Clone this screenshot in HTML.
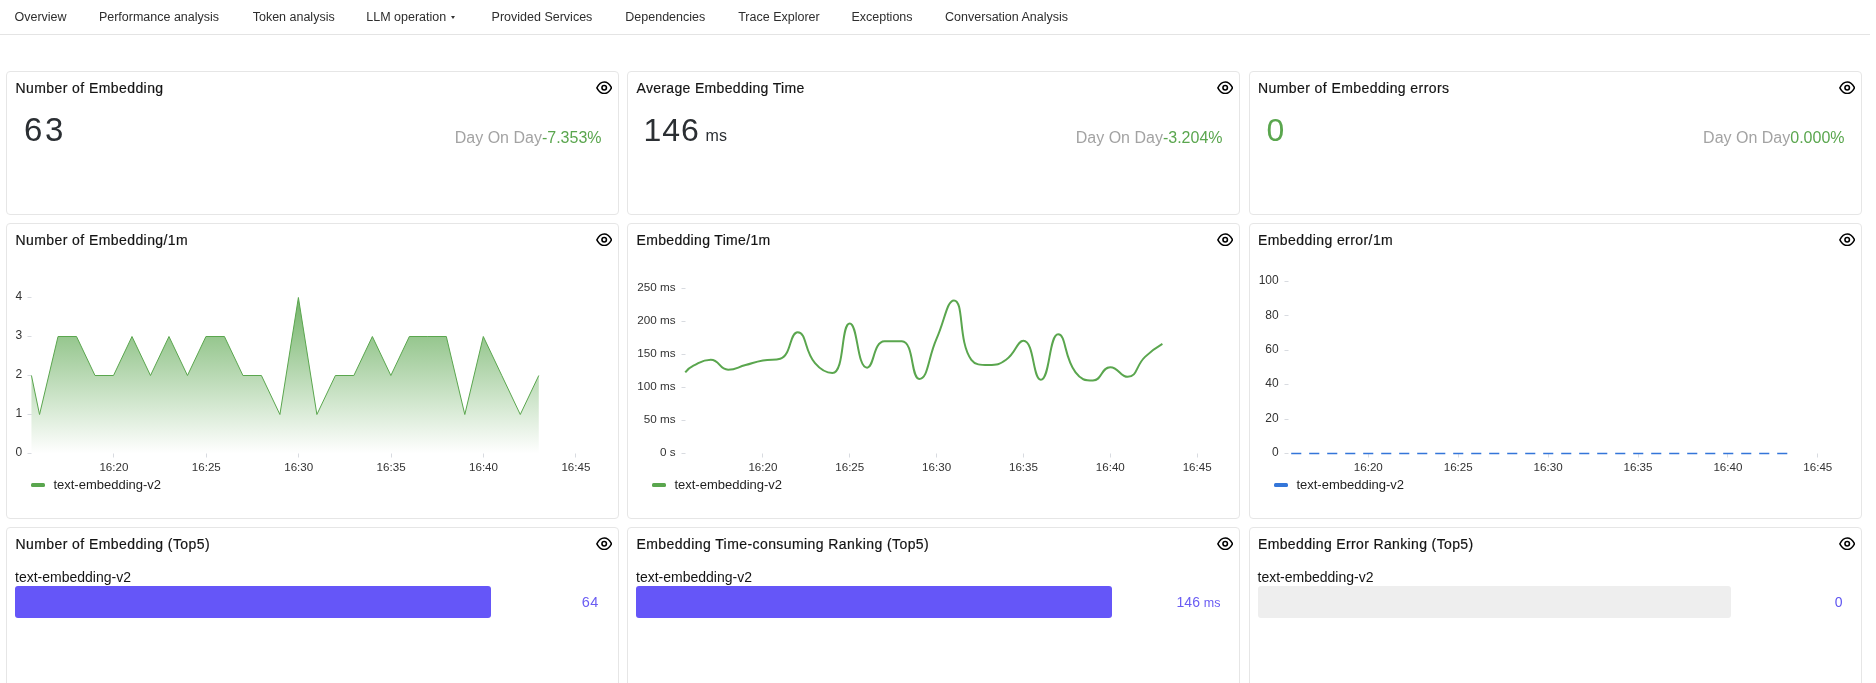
<!DOCTYPE html>
<html><head><meta charset="utf-8"><title>Dashboard</title>
<style>
html,body{margin:0;padding:0;background:#fff;}
body{width:1876px;height:683px;overflow:hidden;position:relative;font-family:"Liberation Sans",sans-serif;}
#wrap{position:absolute;left:0;top:0;width:1876px;height:683px;will-change:transform;}
.t{position:absolute;white-space:nowrap;}
.card{position:absolute;border:1px solid #e6e6e6;border-radius:4px;background:#fff;}
.eye{position:absolute;}
.charts{position:absolute;left:0;top:0;font-family:"Liberation Sans",sans-serif;}
</style></head><body><div id="wrap">
<div class="t" style="left:14.50px;top:11.32px;font-size:12.5px;line-height:12.5px;color:#2e2e2e;">Overview</div>
<div class="t" style="left:98.90px;top:11.32px;font-size:12.5px;line-height:12.5px;color:#2e2e2e;">Performance analysis</div>
<div class="t" style="left:252.70px;top:11.32px;font-size:12.5px;line-height:12.5px;color:#2e2e2e;">Token analysis</div>
<div class="t" style="left:366.30px;top:11.32px;font-size:12.5px;line-height:12.5px;color:#2e2e2e;">LLM operation</div>
<div class="t" style="left:491.60px;top:11.32px;font-size:12.5px;line-height:12.5px;color:#2e2e2e;">Provided Services</div>
<div class="t" style="left:625.30px;top:11.32px;font-size:12.5px;line-height:12.5px;color:#2e2e2e;">Dependencies</div>
<div class="t" style="left:738.20px;top:11.32px;font-size:12.5px;line-height:12.5px;color:#2e2e2e;">Trace Explorer</div>
<div class="t" style="left:851.40px;top:11.32px;font-size:12.5px;line-height:12.5px;color:#2e2e2e;">Exceptions</div>
<div class="t" style="left:945.10px;top:11.32px;font-size:12.5px;line-height:12.5px;color:#2e2e2e;">Conversation Analysis</div>
<div style="position:absolute;left:450.6px;top:16px;width:0;height:0;border-left:2.8px solid transparent;border-right:2.8px solid transparent;border-top:3px solid #333;"></div>
<div style="position:absolute;left:0;top:34px;width:1870px;height:1px;background:#e4e4e4;"></div>
<div class="card" style="left:6px;top:71px;width:611px;height:142px;"></div>
<div class="card" style="left:627px;top:71px;width:611px;height:142px;"></div>
<div class="card" style="left:1249px;top:71px;width:611px;height:142px;"></div>
<div class="card" style="left:6px;top:223px;width:611px;height:294px;"></div>
<div class="card" style="left:627px;top:223px;width:611px;height:294px;"></div>
<div class="card" style="left:1249px;top:223px;width:611px;height:294px;"></div>
<div class="card" style="left:6px;top:527px;width:611px;height:198px;"></div>
<div class="card" style="left:627px;top:527px;width:611px;height:198px;"></div>
<div class="card" style="left:1249px;top:527px;width:611px;height:198px;"></div>
<div class="t" style="left:15.50px;top:80.75px;font-size:14px;line-height:14px;color:#141414;letter-spacing:0.42px;-webkit-text-stroke:0.18px #141414;">Number of Embedding</div>
<svg class="eye" style="left:595.80px;top:80.76px" width="16.4" height="13.67" viewBox="0 0 24 20"><path d="M1.25 10C4.3 4.2 7.8 1.6 12 1.6S19.7 4.2 22.75 10C19.7 15.8 16.2 18.4 12 18.4S4.3 15.8 1.25 10Z" fill="none" stroke="#000" stroke-width="2.2" stroke-linejoin="round"/><circle cx="12" cy="10" r="3.3" fill="none" stroke="#000" stroke-width="2.3"/></svg>
<div class="t" style="left:636.50px;top:80.75px;font-size:14px;line-height:14px;color:#141414;letter-spacing:0.33px;-webkit-text-stroke:0.18px #141414;">Average Embedding Time</div>
<svg class="eye" style="left:1216.80px;top:80.76px" width="16.4" height="13.67" viewBox="0 0 24 20"><path d="M1.25 10C4.3 4.2 7.8 1.6 12 1.6S19.7 4.2 22.75 10C19.7 15.8 16.2 18.4 12 18.4S4.3 15.8 1.25 10Z" fill="none" stroke="#000" stroke-width="2.2" stroke-linejoin="round"/><circle cx="12" cy="10" r="3.3" fill="none" stroke="#000" stroke-width="2.3"/></svg>
<div class="t" style="left:1258.00px;top:80.75px;font-size:14px;line-height:14px;color:#141414;letter-spacing:0.42px;-webkit-text-stroke:0.18px #141414;">Number of Embedding errors</div>
<svg class="eye" style="left:1838.80px;top:80.76px" width="16.4" height="13.67" viewBox="0 0 24 20"><path d="M1.25 10C4.3 4.2 7.8 1.6 12 1.6S19.7 4.2 22.75 10C19.7 15.8 16.2 18.4 12 18.4S4.3 15.8 1.25 10Z" fill="none" stroke="#000" stroke-width="2.2" stroke-linejoin="round"/><circle cx="12" cy="10" r="3.3" fill="none" stroke="#000" stroke-width="2.3"/></svg>
<div class="t" style="left:15.50px;top:232.75px;font-size:14px;line-height:14px;color:#141414;letter-spacing:0.42px;-webkit-text-stroke:0.18px #141414;">Number of Embedding/1m</div>
<svg class="eye" style="left:595.80px;top:232.76px" width="16.4" height="13.67" viewBox="0 0 24 20"><path d="M1.25 10C4.3 4.2 7.8 1.6 12 1.6S19.7 4.2 22.75 10C19.7 15.8 16.2 18.4 12 18.4S4.3 15.8 1.25 10Z" fill="none" stroke="#000" stroke-width="2.2" stroke-linejoin="round"/><circle cx="12" cy="10" r="3.3" fill="none" stroke="#000" stroke-width="2.3"/></svg>
<div class="t" style="left:636.50px;top:232.75px;font-size:14px;line-height:14px;color:#141414;letter-spacing:0.33px;-webkit-text-stroke:0.18px #141414;">Embedding Time/1m</div>
<svg class="eye" style="left:1216.80px;top:232.76px" width="16.4" height="13.67" viewBox="0 0 24 20"><path d="M1.25 10C4.3 4.2 7.8 1.6 12 1.6S19.7 4.2 22.75 10C19.7 15.8 16.2 18.4 12 18.4S4.3 15.8 1.25 10Z" fill="none" stroke="#000" stroke-width="2.2" stroke-linejoin="round"/><circle cx="12" cy="10" r="3.3" fill="none" stroke="#000" stroke-width="2.3"/></svg>
<div class="t" style="left:1258.00px;top:232.75px;font-size:14px;line-height:14px;color:#141414;letter-spacing:0.42px;-webkit-text-stroke:0.18px #141414;">Embedding error/1m</div>
<svg class="eye" style="left:1838.80px;top:232.76px" width="16.4" height="13.67" viewBox="0 0 24 20"><path d="M1.25 10C4.3 4.2 7.8 1.6 12 1.6S19.7 4.2 22.75 10C19.7 15.8 16.2 18.4 12 18.4S4.3 15.8 1.25 10Z" fill="none" stroke="#000" stroke-width="2.2" stroke-linejoin="round"/><circle cx="12" cy="10" r="3.3" fill="none" stroke="#000" stroke-width="2.3"/></svg>
<div class="t" style="left:15.50px;top:536.75px;font-size:14px;line-height:14px;color:#141414;letter-spacing:0.42px;-webkit-text-stroke:0.18px #141414;">Number of Embedding (Top5)</div>
<svg class="eye" style="left:595.80px;top:536.76px" width="16.4" height="13.67" viewBox="0 0 24 20"><path d="M1.25 10C4.3 4.2 7.8 1.6 12 1.6S19.7 4.2 22.75 10C19.7 15.8 16.2 18.4 12 18.4S4.3 15.8 1.25 10Z" fill="none" stroke="#000" stroke-width="2.2" stroke-linejoin="round"/><circle cx="12" cy="10" r="3.3" fill="none" stroke="#000" stroke-width="2.3"/></svg>
<div class="t" style="left:636.50px;top:536.75px;font-size:14px;line-height:14px;color:#141414;letter-spacing:0.42px;-webkit-text-stroke:0.18px #141414;">Embedding Time-consuming Ranking (Top5)</div>
<svg class="eye" style="left:1216.80px;top:536.76px" width="16.4" height="13.67" viewBox="0 0 24 20"><path d="M1.25 10C4.3 4.2 7.8 1.6 12 1.6S19.7 4.2 22.75 10C19.7 15.8 16.2 18.4 12 18.4S4.3 15.8 1.25 10Z" fill="none" stroke="#000" stroke-width="2.2" stroke-linejoin="round"/><circle cx="12" cy="10" r="3.3" fill="none" stroke="#000" stroke-width="2.3"/></svg>
<div class="t" style="left:1258.00px;top:536.75px;font-size:14px;line-height:14px;color:#141414;letter-spacing:0.36px;-webkit-text-stroke:0.18px #141414;">Embedding Error Ranking (Top5)</div>
<svg class="eye" style="left:1838.80px;top:536.76px" width="16.4" height="13.67" viewBox="0 0 24 20"><path d="M1.25 10C4.3 4.2 7.8 1.6 12 1.6S19.7 4.2 22.75 10C19.7 15.8 16.2 18.4 12 18.4S4.3 15.8 1.25 10Z" fill="none" stroke="#000" stroke-width="2.2" stroke-linejoin="round"/><circle cx="12" cy="10" r="3.3" fill="none" stroke="#000" stroke-width="2.3"/></svg>
<div class="t" style="left:24.00px;top:113.47px;font-size:33px;line-height:33px;color:#2b2f33;letter-spacing:2.6px;">63</div>
<div class="t" style="left:643.50px;top:114.11px;font-size:32px;line-height:32px;color:#2b2f33;letter-spacing:1.0px;">146</div>
<div class="t" style="left:705.60px;top:127.66px;font-size:16px;line-height:16px;color:#2b2f33;">ms</div>
<div class="t" style="left:1266.50px;top:114.11px;font-size:32px;line-height:32px;color:#5aa64e;">0</div>
<div class="t" style="right:1274.50px;top:129.96px;font-size:16px;line-height:16px;color:#5aa64e;"><span style="color:#a3a3a3">Day On Day</span>-7.353%</div>
<div class="t" style="right:653.50px;top:129.96px;font-size:16px;line-height:16px;color:#5aa64e;"><span style="color:#a3a3a3">Day On Day</span>-3.204%</div>
<div class="t" style="right:31.50px;top:129.96px;font-size:16px;line-height:16px;color:#5aa64e;"><span style="color:#a3a3a3">Day On Day</span>0.000%</div>
<div class="t" style="left:15.00px;top:569.85px;font-size:14px;line-height:14px;color:#141414;">text-embedding-v2</div>
<div class="t" style="left:636.00px;top:569.85px;font-size:14px;line-height:14px;color:#141414;">text-embedding-v2</div>
<div class="t" style="left:1257.50px;top:569.85px;font-size:14px;line-height:14px;color:#141414;">text-embedding-v2</div>
<div style="position:absolute;left:15.1px;top:586px;width:475.8px;height:32px;border-radius:3px;background:#6556f8;"></div>
<div style="position:absolute;left:636.0px;top:586px;width:475.8px;height:32px;border-radius:3px;background:#6556f8;"></div>
<div style="position:absolute;left:1258.0px;top:586px;width:472.8px;height:32px;border-radius:3px;background:#eeeeee;"></div>
<div class="t" style="right:1277.00px;top:594.83px;font-size:14.5px;line-height:14.5px;color:#6a5cf3;letter-spacing:0.6px;">64</div>
<div class="t" style="right:655.50px;top:595.25px;font-size:14px;line-height:14px;color:#6a5cf3;">146 <span style="font-size:12.5px">ms</span></div>
<div class="t" style="right:33.50px;top:595.25px;font-size:14px;line-height:14px;color:#5f55f0;">0</div>
<svg class="charts" width="1876" height="683" viewBox="0 0 1876 683"><defs><linearGradient id="g1" x1="0" y1="297.5" x2="0" y2="453.5" gradientUnits="userSpaceOnUse"><stop offset="0" stop-color="#5aa64e" stop-opacity="0.85"/><stop offset="1" stop-color="#5aa64e" stop-opacity="0.0"/></linearGradient></defs><line x1="27.50" y1="453.50" x2="31.50" y2="453.50" stroke="#d8dbe0" stroke-width="1"/><text x="22.30" y="456.10" font-size="12" fill="#333" text-anchor="end">0</text><line x1="27.50" y1="414.50" x2="31.50" y2="414.50" stroke="#d8dbe0" stroke-width="1"/><text x="22.30" y="417.10" font-size="12" fill="#333" text-anchor="end">1</text><line x1="27.50" y1="375.50" x2="31.50" y2="375.50" stroke="#d8dbe0" stroke-width="1"/><text x="22.30" y="378.10" font-size="12" fill="#333" text-anchor="end">2</text><line x1="27.50" y1="336.50" x2="31.50" y2="336.50" stroke="#d8dbe0" stroke-width="1"/><text x="22.30" y="339.10" font-size="12" fill="#333" text-anchor="end">3</text><line x1="27.50" y1="297.50" x2="31.50" y2="297.50" stroke="#d8dbe0" stroke-width="1"/><text x="22.30" y="300.10" font-size="12" fill="#333" text-anchor="end">4</text><line x1="113.50" y1="453.50" x2="113.50" y2="457.50" stroke="#d8dbe0" stroke-width="1"/><text x="113.90" y="470.90" font-size="11.6" fill="#333" text-anchor="middle">16:20</text><line x1="206.50" y1="453.50" x2="206.50" y2="457.50" stroke="#d8dbe0" stroke-width="1"/><text x="206.30" y="470.90" font-size="11.6" fill="#333" text-anchor="middle">16:25</text><line x1="298.50" y1="453.50" x2="298.50" y2="457.50" stroke="#d8dbe0" stroke-width="1"/><text x="298.70" y="470.90" font-size="11.6" fill="#333" text-anchor="middle">16:30</text><line x1="391.50" y1="453.50" x2="391.50" y2="457.50" stroke="#d8dbe0" stroke-width="1"/><text x="391.10" y="470.90" font-size="11.6" fill="#333" text-anchor="middle">16:35</text><line x1="483.50" y1="453.50" x2="483.50" y2="457.50" stroke="#d8dbe0" stroke-width="1"/><text x="483.50" y="470.90" font-size="11.6" fill="#333" text-anchor="middle">16:40</text><line x1="575.50" y1="453.50" x2="575.50" y2="457.50" stroke="#d8dbe0" stroke-width="1"/><text x="575.90" y="470.90" font-size="11.6" fill="#333" text-anchor="middle">16:45</text><path d="M31.45,375.50 L39.54,414.50 L58.03,336.50 L76.52,336.50 L95.01,375.50 L113.50,375.50 L131.99,336.50 L150.48,375.50 L168.97,336.50 L187.46,375.50 L205.95,336.50 L224.44,336.50 L242.93,375.50 L261.42,375.50 L279.91,414.50 L298.40,297.50 L316.89,414.50 L335.38,375.50 L353.87,375.50 L372.36,336.50 L390.85,375.50 L409.34,336.50 L427.83,336.50 L446.32,336.50 L464.81,414.50 L483.30,336.50 L501.79,375.50 L520.28,414.50 L538.77,375.50 L538.77,453.50 L31.45,453.50 Z" fill="url(#g1)"/><path d="M31.45,375.50 L39.54,414.50 L58.03,336.50 L76.52,336.50 L95.01,375.50 L113.50,375.50 L131.99,336.50 L150.48,375.50 L168.97,336.50 L187.46,375.50 L205.95,336.50 L224.44,336.50 L242.93,375.50 L261.42,375.50 L279.91,414.50 L298.40,297.50 L316.89,414.50 L335.38,375.50 L353.87,375.50 L372.36,336.50 L390.85,375.50 L409.34,336.50 L427.83,336.50 L446.32,336.50 L464.81,414.50 L483.30,336.50 L501.79,375.50 L520.28,414.50 L538.77,375.50" fill="none" stroke="#5aa64e" stroke-width="1" stroke-linejoin="round"/><rect x="31" y="483" width="14" height="4" rx="1.5" fill="#5aa64e"/><text x="53.40" y="488.80" font-size="13" fill="#1f1f1f" text-anchor="start">text-embedding-v2</text><line x1="681.50" y1="453.50" x2="685.50" y2="453.50" stroke="#d8dbe0" stroke-width="1"/><text x="675.60" y="456.10" font-size="11.7" fill="#333" text-anchor="end">0 s</text><line x1="681.50" y1="420.50" x2="685.50" y2="420.50" stroke="#d8dbe0" stroke-width="1"/><text x="675.60" y="423.10" font-size="11.7" fill="#333" text-anchor="end">50 ms</text><line x1="681.50" y1="387.50" x2="685.50" y2="387.50" stroke="#d8dbe0" stroke-width="1"/><text x="675.60" y="390.10" font-size="11.7" fill="#333" text-anchor="end">100 ms</text><line x1="681.50" y1="354.50" x2="685.50" y2="354.50" stroke="#d8dbe0" stroke-width="1"/><text x="675.60" y="357.10" font-size="11.7" fill="#333" text-anchor="end">150 ms</text><line x1="681.50" y1="321.50" x2="685.50" y2="321.50" stroke="#d8dbe0" stroke-width="1"/><text x="675.60" y="324.10" font-size="11.7" fill="#333" text-anchor="end">200 ms</text><line x1="681.50" y1="288.50" x2="685.50" y2="288.50" stroke="#d8dbe0" stroke-width="1"/><text x="675.60" y="291.10" font-size="11.7" fill="#333" text-anchor="end">250 ms</text><line x1="762.50" y1="453.50" x2="762.50" y2="457.50" stroke="#d8dbe0" stroke-width="1"/><text x="762.90" y="470.90" font-size="11.6" fill="#333" text-anchor="middle">16:20</text><line x1="849.50" y1="453.50" x2="849.50" y2="457.50" stroke="#d8dbe0" stroke-width="1"/><text x="849.75" y="470.90" font-size="11.6" fill="#333" text-anchor="middle">16:25</text><line x1="936.50" y1="453.50" x2="936.50" y2="457.50" stroke="#d8dbe0" stroke-width="1"/><text x="936.60" y="470.90" font-size="11.6" fill="#333" text-anchor="middle">16:30</text><line x1="1023.50" y1="453.50" x2="1023.50" y2="457.50" stroke="#d8dbe0" stroke-width="1"/><text x="1023.45" y="470.90" font-size="11.6" fill="#333" text-anchor="middle">16:35</text><line x1="1110.50" y1="453.50" x2="1110.50" y2="457.50" stroke="#d8dbe0" stroke-width="1"/><text x="1110.30" y="470.90" font-size="11.6" fill="#333" text-anchor="middle">16:40</text><line x1="1197.50" y1="453.50" x2="1197.50" y2="457.50" stroke="#d8dbe0" stroke-width="1"/><text x="1197.15" y="470.90" font-size="11.6" fill="#333" text-anchor="middle">16:45</text><path d="M685.25,372.32 C685.25,372.32 688.77,368.00 693.42,365.72 C701.54,361.73 702.48,359.78 710.79,359.78 C719.85,359.78 719.01,369.68 728.16,369.68 C736.38,369.68 736.85,367.37 745.53,365.06 C754.21,362.75 754.09,362.05 762.90,360.44 C771.46,358.88 774.09,360.44 780.27,358.72 C791.46,355.62 789.44,332.32 797.64,332.32 C806.81,332.32 803.92,350.10 815.01,363.08 C821.29,370.43 827.59,372.98 832.38,372.98 C844.96,372.98 840.63,323.48 849.75,323.48 C858.00,323.48 856.69,367.70 867.12,367.70 C874.06,367.70 873.28,341.30 884.49,341.30 C890.65,341.30 896.73,341.30 901.86,341.30 C914.10,341.30 910.79,378.92 919.23,378.92 C928.16,378.92 927.73,358.71 936.60,338.66 C945.10,319.44 946.94,300.38 953.97,300.38 C964.31,300.38 957.91,341.78 971.34,359.78 C975.28,365.06 980.02,365.06 988.71,365.06 C997.39,365.06 998.90,364.80 1006.08,359.78 C1016.27,352.66 1016.92,340.77 1023.45,340.77 C1034.29,340.77 1032.70,379.78 1040.82,379.78 C1050.07,379.78 1048.85,334.37 1058.19,334.37 C1066.22,334.37 1063.66,356.56 1075.56,372.39 C1081.03,379.66 1084.82,380.57 1092.93,380.57 C1102.19,380.57 1101.18,367.17 1110.30,367.17 C1118.55,367.17 1120.22,376.81 1127.67,376.81 C1137.59,376.81 1135.49,365.91 1145.04,356.88 C1152.86,349.48 1162.41,343.94 1162.41,343.94" fill="none" stroke="#5aa64e" stroke-width="2" stroke-linejoin="round"/><rect x="652" y="483" width="14" height="4" rx="1.5" fill="#5aa64e"/><text x="674.40" y="488.80" font-size="13" fill="#1f1f1f" text-anchor="start">text-embedding-v2</text><line x1="1284.50" y1="453.50" x2="1288.50" y2="453.50" stroke="#d8dbe0" stroke-width="1"/><text x="1278.70" y="456.10" font-size="12" fill="#333" text-anchor="end">0</text><line x1="1284.50" y1="419.50" x2="1288.50" y2="419.50" stroke="#d8dbe0" stroke-width="1"/><text x="1278.70" y="421.70" font-size="12" fill="#333" text-anchor="end">20</text><line x1="1284.50" y1="384.50" x2="1288.50" y2="384.50" stroke="#d8dbe0" stroke-width="1"/><text x="1278.70" y="387.30" font-size="12" fill="#333" text-anchor="end">40</text><line x1="1284.50" y1="350.50" x2="1288.50" y2="350.50" stroke="#d8dbe0" stroke-width="1"/><text x="1278.70" y="352.90" font-size="12" fill="#333" text-anchor="end">60</text><line x1="1284.50" y1="315.50" x2="1288.50" y2="315.50" stroke="#d8dbe0" stroke-width="1"/><text x="1278.70" y="318.50" font-size="12" fill="#333" text-anchor="end">80</text><line x1="1284.50" y1="281.50" x2="1288.50" y2="281.50" stroke="#d8dbe0" stroke-width="1"/><text x="1278.70" y="284.10" font-size="12" fill="#333" text-anchor="end">100</text><line x1="1368.50" y1="453.50" x2="1368.50" y2="457.50" stroke="#d8dbe0" stroke-width="1"/><text x="1368.30" y="470.90" font-size="11.6" fill="#333" text-anchor="middle">16:20</text><line x1="1458.50" y1="453.50" x2="1458.50" y2="457.50" stroke="#d8dbe0" stroke-width="1"/><text x="1458.20" y="470.90" font-size="11.6" fill="#333" text-anchor="middle">16:25</text><line x1="1548.50" y1="453.50" x2="1548.50" y2="457.50" stroke="#d8dbe0" stroke-width="1"/><text x="1548.10" y="470.90" font-size="11.6" fill="#333" text-anchor="middle">16:30</text><line x1="1638.50" y1="453.50" x2="1638.50" y2="457.50" stroke="#d8dbe0" stroke-width="1"/><text x="1638.00" y="470.90" font-size="11.6" fill="#333" text-anchor="middle">16:35</text><line x1="1727.50" y1="453.50" x2="1727.50" y2="457.50" stroke="#d8dbe0" stroke-width="1"/><text x="1727.90" y="470.90" font-size="11.6" fill="#333" text-anchor="middle">16:40</text><line x1="1817.50" y1="453.50" x2="1817.50" y2="457.50" stroke="#d8dbe0" stroke-width="1"/><text x="1817.80" y="470.90" font-size="11.6" fill="#333" text-anchor="middle">16:45</text><line x1="1291.2" y1="453.5" x2="1788" y2="453.5" stroke="#3476d9" stroke-width="1.3" stroke-dasharray="10.1 7.9"/><rect x="1274" y="483" width="14" height="4" rx="1.5" fill="#3476d9"/><text x="1296.40" y="488.80" font-size="13" fill="#1f1f1f" text-anchor="start">text-embedding-v2</text></svg>
</div></body></html>
